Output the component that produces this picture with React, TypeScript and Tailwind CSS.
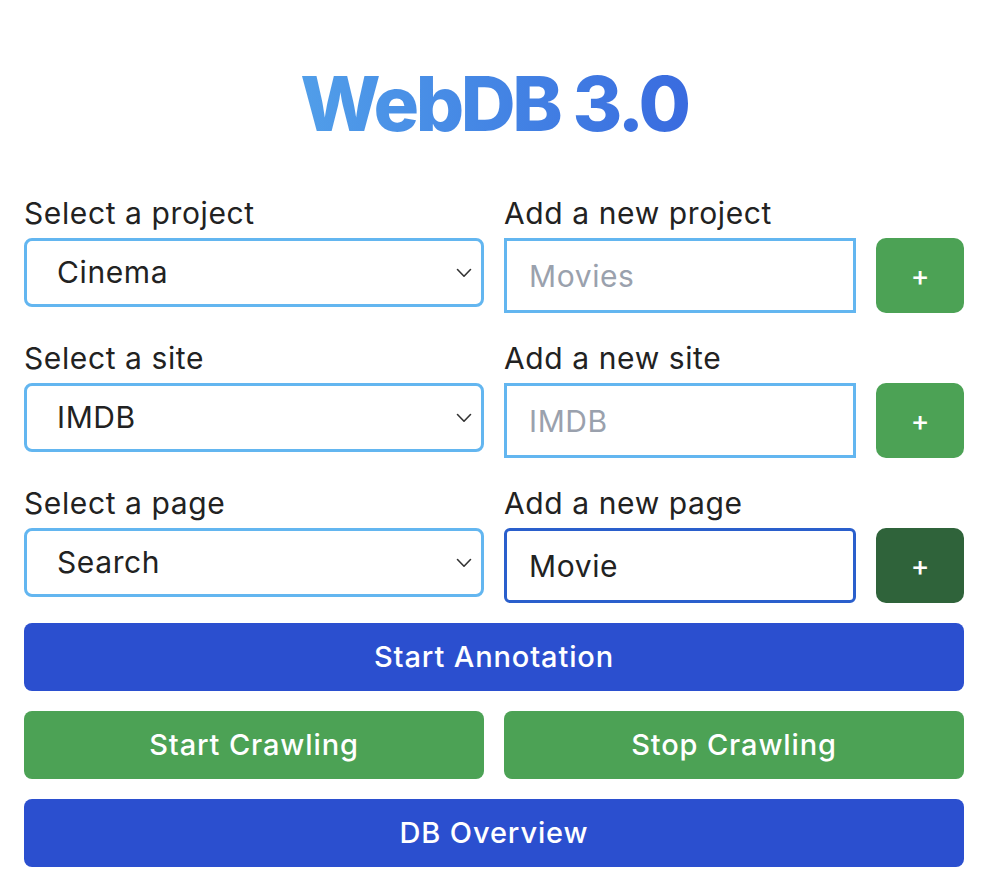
import React, { useState } from 'react';

const projects = ['Cinema', 'Books', 'Music'];
const sites = ['IMDB', 'Letterboxd', 'Rotten Tomatoes'];
const pages = ['Search', 'Detail', 'List'];

type FieldRowProps = {
  selectLabel: string;
  options: string[];
  addLabel: string;
  placeholder: string;
  value?: string;
  focused?: boolean;
};

const Chevron = () => (
  <svg
    className="pointer-events-none absolute right-[12px] top-1/2 -translate-y-1/2"
    width="16"
    height="10"
    viewBox="0 0 16 10"
    fill="none"
    stroke="#333"
    strokeWidth="1.6"
    strokeLinecap="round"
    strokeLinejoin="round"
  >
    <path d="M1.5 1.5 8 8.2l6.5-6.7" />
  </svg>
);

const FieldRow: React.FC<FieldRowProps> = ({ selectLabel, options, addLabel, placeholder, value, focused }) => {
  const [selected, setSelected] = useState(options[0]);
  const [text, setText] = useState(value ?? '');

  return (
    <div className="grid grid-cols-2 gap-5">
      <div className="flex flex-col">
        <label className="text-[30px] leading-[36px] tracking-[0.02em] text-[#222] mb-[7px]">{selectLabel}</label>
        <div className="relative">
          <select
            value={selected}
            onChange={e => setSelected(e.target.value)}
            className="appearance-none w-full h-[69px] border-[3px] border-[#63b6f0] rounded-[8px] bg-white pl-[30px] pr-10 text-[30px] tracking-[0.02em] text-[#222] outline-none"
          >
            {options.map(o => (
              <option key={o}>{o}</option>
            ))}
          </select>
          <Chevron />
        </div>
      </div>
      <div className="flex flex-col">
        <label className="text-[30px] leading-[36px] tracking-[0.02em] text-[#222] mb-[7px]">{addLabel}</label>
        <div className="flex gap-5">
          <input
            value={text}
            onChange={e => setText(e.target.value)}
            placeholder={placeholder}
            className={
              focused
                ? 'flex-1 min-w-0 h-[75px] border-[3px] border-[#2a5fcc] rounded-[6px] px-[22px] text-[30px] tracking-[0.02em] text-[#222] outline-none'
                : 'flex-1 min-w-0 h-[75px] border-[3px] border-[#63b6f0] px-[22px] text-[30px] tracking-[0.02em] text-[#222] placeholder:text-[#9aa1ad] outline-none'
            }
          />
          <button
            className={
              focused
                ? 'w-[88px] h-[75px] rounded-[10px] bg-[#2f633a] text-white text-[28px] font-medium'
                : 'w-[88px] h-[75px] rounded-[10px] bg-[#4ca255] text-white text-[28px] font-medium'
            }
          >
            +
          </button>
        </div>
      </div>
    </div>
  );
};

export default function App() {
  return (
    <div className="min-h-screen bg-white font-['Inter','Liberation_Sans',sans-serif]">
      <div className="w-[940px] ml-[24px] pt-[65px] pb-5 flex flex-col">
        <h1 className="text-center text-[76px] leading-none font-extrabold tracking-[-0.045em] mb-[54px]">
          <span className="bg-gradient-to-r from-[#519ee9] to-[#3a6bdf] bg-clip-text text-transparent">WebDB 3.0</span>
        </h1>

        <div className="flex flex-col gap-[27px]">
          <FieldRow selectLabel="Select a project" options={projects} addLabel="Add a new project" placeholder="Movies" />
          <FieldRow selectLabel="Select a site" options={sites} addLabel="Add a new site" placeholder="IMDB" />
          <FieldRow selectLabel="Select a page" options={pages} addLabel="Add a new page" placeholder="Page" value="Movie" focused />
        </div>

        <div className="flex flex-col gap-5 mt-5">
          <button className="h-[68px] rounded-[8px] bg-[#2b4fcf] text-white text-[29px] tracking-[0.03em] font-medium">Start Annotation</button>
          <div className="grid grid-cols-2 gap-5">
            <button className="h-[68px] rounded-[8px] bg-[#4ca255] text-white text-[29px] tracking-[0.03em] font-medium">Start Crawling</button>
            <button className="h-[68px] rounded-[8px] bg-[#4ca255] text-white text-[29px] tracking-[0.03em] font-medium">Stop Crawling</button>
          </div>
          <button className="h-[68px] rounded-[8px] bg-[#2b4fcf] text-white text-[29px] tracking-[0.03em] font-medium">DB Overview</button>
        </div>
      </div>
    </div>
  );
}
